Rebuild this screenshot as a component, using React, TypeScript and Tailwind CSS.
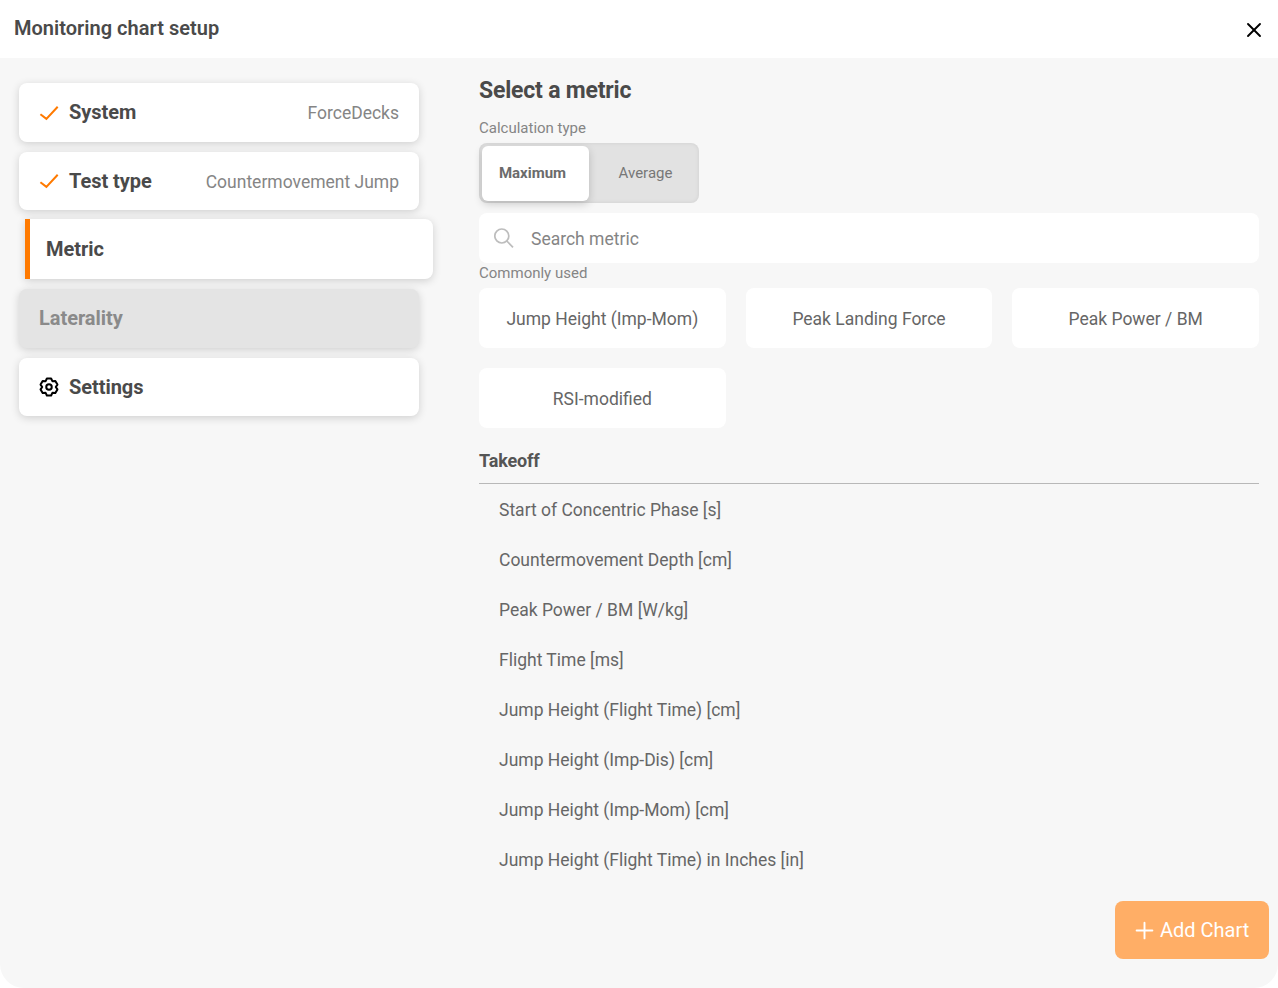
import React from "react";
import { X, Plus } from "lucide-react";

const common = ["Jump Height (Imp-Mom)", "Peak Landing Force", "Peak Power / BM", "RSI-modified"];
const metrics = [
  "Start of Concentric Phase [s]",
  "Countermovement Depth [cm]",
  "Peak Power / BM [W/kg]",
  "Flight Time [ms]",
  "Jump Height (Flight Time) [cm]",
  "Jump Height (Imp-Dis) [cm]",
  "Jump Height (Imp-Mom) [cm]",
  "Jump Height (Flight Time) in Inches [in]",
];

const shadow = "shadow-[0_2px_8px_rgba(0,0,0,0.16)]";

function Tick() {
  return (
    <svg viewBox="0 0 20 20" className="w-[20px] h-[20px] mr-[10px] shrink-0" fill="none" stroke="#ff7a00" strokeWidth="2">
      <path d="M1.4 11.3L7.4 15.9L18.7 3.7" />
    </svg>
  );
}

function Gear() {
  return (
    <svg viewBox="0 0 24 24" className="w-[22px] h-[22px] -ml-[1px] mr-[9px] shrink-0" fill="none" stroke="#000" strokeWidth="2.2" strokeLinejoin="round">
      <path d="M9.7 2.7H14.3L15.7 5.6L18.9 5.4L21.2 9.4L19.4 12L21.2 14.6L18.9 18.6L15.7 18.4L14.3 21.3H9.7L8.3 18.4L5.1 18.6L2.8 14.6L4.6 12L2.8 9.4L5.1 5.4L8.3 5.6Z" />
      <circle cx="12" cy="12" r="3" />
    </svg>
  );
}

function Magnifier() {
  return (
    <svg viewBox="0 0 20 20" className="w-[20px] h-[20px] shrink-0" fill="none" stroke="#bdbdbd" strokeWidth="1.7">
      <circle cx="7.8" cy="8" r="7" />
      <path d="M12.8 13L19 19.4" />
    </svg>
  );
}

export default function App() {
  return (
    <div className="w-[1278px] h-[988px] bg-white overflow-hidden font-['Roboto',sans-serif] text-[#4a4a4a]">
      <header className="h-[58px] flex items-center justify-between pl-[14px] pr-[12px]">
        <h1 className="text-[20px] font-semibold leading-none -mt-[2px] tracking-[0.02px]">Monitoring chart setup</h1>
        <X className="w-[24px] h-[24px] text-black mt-[2px]" strokeWidth={1.9} />
      </header>
      <main className="h-[930px] bg-[#f7f7f7] rounded-b-[24px] flex relative">
        <nav className="w-[479px] shrink-0 pl-[19px] pt-[25px] flex flex-col">
          <div className={`w-[400px] h-[59px] bg-white rounded-[8px] ${shadow} flex items-center px-[20px]`}>
            <Tick />
            <span className="text-[20px] font-bold -mt-[1px] tracking-[-0.05px]">System</span>
            <span className="ml-auto pt-[2px] text-[17.5px] text-[#858585]">ForceDecks</span>
          </div>
          <div className={`w-[400px] h-[58px] mt-[10px] bg-white rounded-[8px] ${shadow} flex items-center px-[20px]`}>
            <Tick />
            <span className="text-[20px] font-bold tracking-[-0.05px]">Test type</span>
            <span className="ml-auto pt-[2px] text-[17.5px] text-[#858585]">Countermovement Jump</span>
          </div>
          <div className={`w-[408px] ml-[6px] h-[60px] mt-[9px] bg-white rounded-r-[8px] ${shadow} flex items-center border-l-[5px] border-[#ff7a00] pl-[16px]`}>
            <span className="text-[20px] font-bold tracking-[-0.05px]">Metric</span>
          </div>
          <div className={`w-[400px] h-[59px] mt-[10px] bg-[#e4e4e4] rounded-[8px] ${shadow} flex items-center px-[20px]`}>
            <span className="text-[20px] font-bold text-[#8a8a8a] -mt-[1px] tracking-[-0.05px]">Laterality</span>
          </div>
          <div className={`w-[400px] h-[58px] mt-[10px] bg-white rounded-[8px] ${shadow} flex items-center px-[20px]`}>
            <Gear />
            <span className="text-[20px] font-bold tracking-[-0.05px]">Settings</span>
          </div>
        </nav>
        <section className="w-[780px] shrink-0 pt-[19px] flex flex-col">
          <h2 className="text-[23px] font-bold leading-[28px] tracking-[-0.2px]">Select a metric</h2>
          <div className="text-[15px] text-[#858585] leading-[18px] mt-[14px]">Calculation type</div>
          <div className="mt-[6px] w-[220px] h-[60px] rounded-[8px] bg-[#e2e2e2] shadow-[inset_0_0_4px_rgba(0,0,0,0.08)] p-[3px] flex">
            <div className="w-[107px] h-[55px] pr-[6px] bg-white rounded-[6px] shadow-[0_3px_8px_rgba(0,0,0,0.18)] flex items-center justify-center text-[15px] font-bold text-[#6b6b6b]">Maximum</div>
            <div className="flex-1 pl-[6px] flex items-center justify-center text-[15px] text-[#777777]">Average</div>
          </div>
          <div className="mt-[10px] h-[50px] bg-white rounded-[8px] flex items-center pl-[15px]">
            <Magnifier />
            <span className="ml-[17px] pt-[2px] text-[17.5px] text-[#858585]">Search metric</span>
          </div>
          <div className="mt-[1px] text-[15px] text-[#858585] leading-[18px]">Commonly used</div>
          <div className="mt-[6px] grid grid-cols-3 gap-x-[20px] gap-y-[20px]">
            {common.map((c) => (
              <div key={c} className="h-[60px] pt-[2px] bg-white rounded-[8px] flex items-center justify-center text-[17.5px] text-[#666666]">{c}</div>
            ))}
          </div>
          <div className="mt-[20px] h-[36px] border-b border-[#b8b8b8] text-[18px] font-bold leading-[26px] tracking-[-0.15px] text-[#555555]">Takeoff</div>
          <ul className="flex flex-col">
            {metrics.map((m) => (
              <li key={m} className="h-[50px] pt-[2px] flex items-center pl-[20px] text-[17.5px] text-[#666666]">{m}</li>
            ))}
          </ul>
        </section>
        <button className="absolute left-[1115px] top-[843px] w-[154px] h-[58px] rounded-[8px] bg-[#ffae66] text-white text-[20px] flex items-center">
          <Plus className="w-[27px] h-[27px] ml-[16px] mr-[2px]" strokeWidth={1.7} />
          <span>Add Chart</span>
        </button>
      </main>
    </div>
  );
}
